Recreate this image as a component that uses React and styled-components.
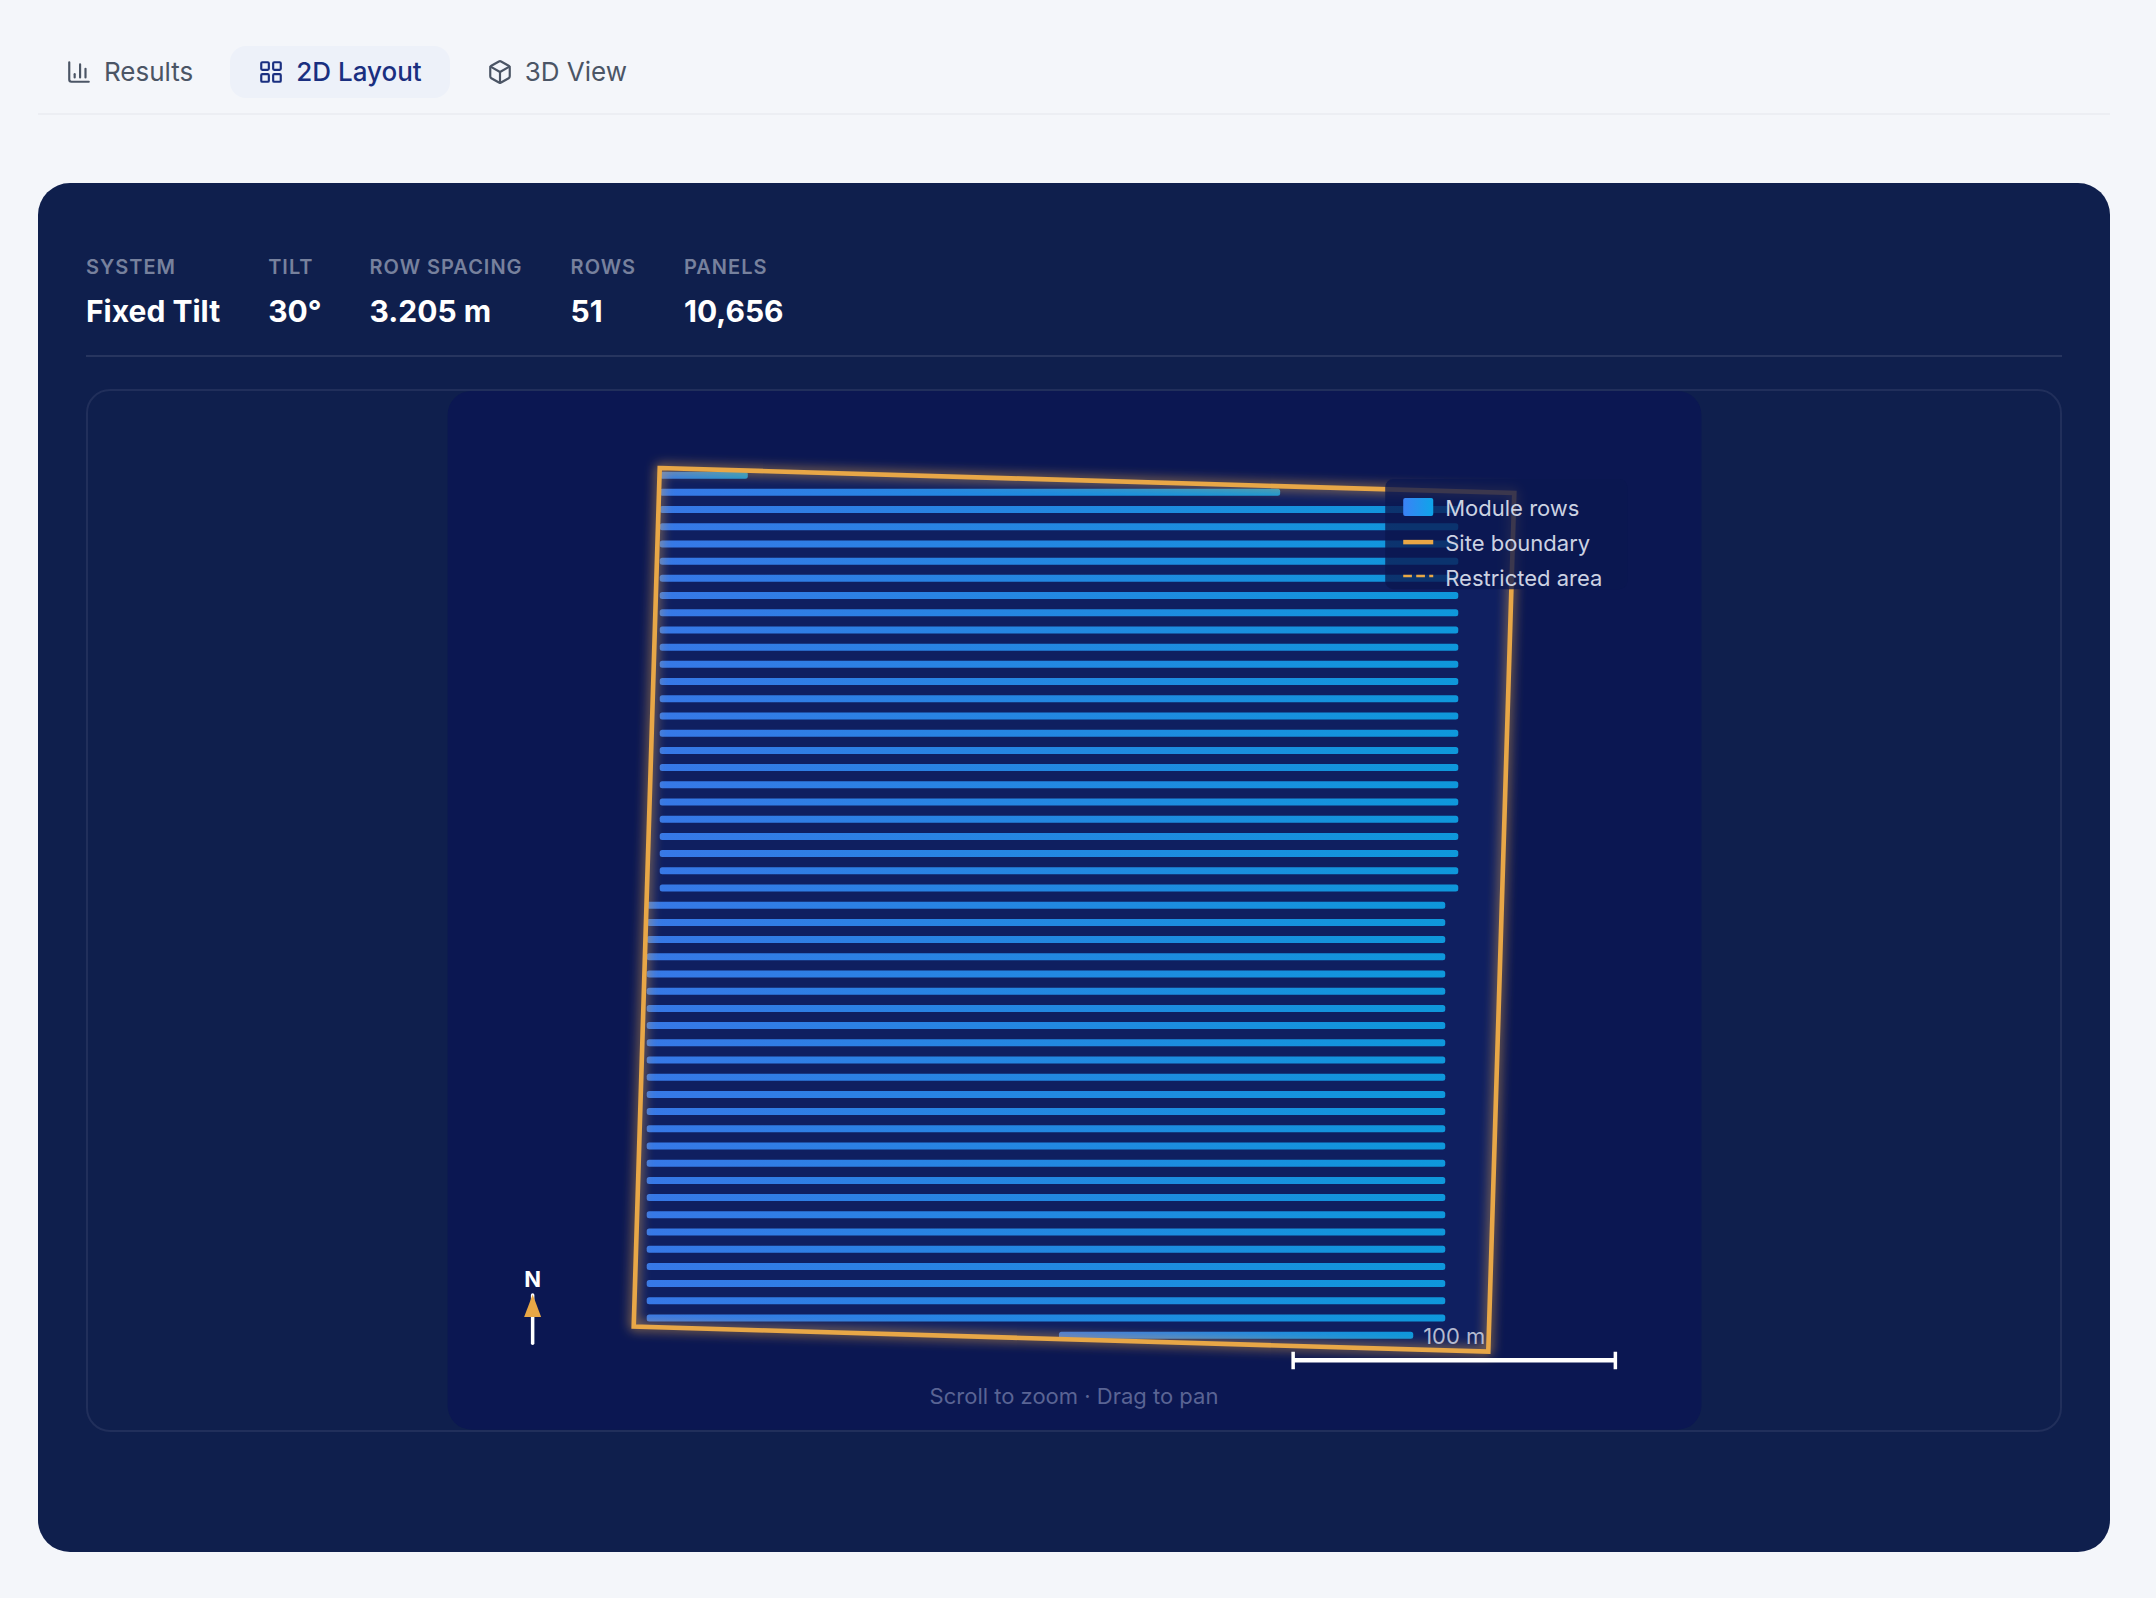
import { useState } from "react";
import styled, { createGlobalStyle } from "styled-components";

const GlobalStyle = createGlobalStyle`
  body {
    margin: 0;
    background: #f4f6fa;
    font-family: Inter, "Liberation Sans", sans-serif;
  }
`;

const Page = styled.main`
  padding: 46px 46px 46px 38px;
`;

const Tabs = styled.nav`
  display: flex;
  gap: 9px;
  padding-bottom: 15px;
  border-bottom: 2px solid #eceef3;
  margin-bottom: 68px;
`;

const Tab = styled.button`
  display: flex;
  align-items: center;
  gap: 12px;
  height: 52px;
  padding: 0 28px;
  border: none;
  border-radius: 16px;
  font-family: inherit;
  font-size: 26px;
  line-height: 30px;
  font-weight: ${(props) => (props.$active ? 500 : 400)};
  color: ${(props) => (props.$active ? "#1a2f80" : "#4b5565")};
  background: ${(props) => (props.$active ? "#edf1f9" : "transparent")};
  cursor: pointer;
`;

const TabIcon = styled.svg`
  width: 26px;
  height: 26px;
  fill: none;
  stroke: currentColor;
  stroke-width: 2;
  stroke-linecap: round;
  stroke-linejoin: round;
`;

const Card = styled.section`
  padding: 72px 48px 120px;
  border-radius: 32px;
  background: #0f1f4d;
`;

const Stats = styled.dl`
  display: flex;
  flex-wrap: wrap;
  gap: 48px;
  margin: 0 0 32px;
  padding-bottom: 26px;
  border-bottom: 2px solid #27355f;
`;

const Stat = styled.div`
  display: flex;
  flex-direction: column;
  gap: 14px;
`;

const StatLabel = styled.dt`
  font-size: 20px;
  line-height: 24px;
  font-weight: 600;
  letter-spacing: 1px;
  text-transform: uppercase;
  color: #77819d;
`;

const StatValue = styled.dd`
  margin: 0;
  font-size: 30px;
  line-height: 36px;
  font-weight: 700;
  color: #fff;
`;

const Stage = styled.div`
  border: 2px solid #212f5b;
  border-radius: 24px;
  overflow: hidden;
`;

const Plan = styled.svg`
  display: block;
  width: 100%;
  height: 65vh;
  cursor: grab;
`;

const PlanText = styled.text`
  font-size: 22px;
  font-weight: ${(props) => props.$weight || 400};
  fill: ${(props) => props.$color || "#ccd2e2"};
`;

const tabs = [
  {
    id: "results",
    label: "Results",
    icon: (
      <>
        <path d="M3 3v16a2 2 0 0 0 2 2h16" />
        <path d="M8 17v-3" />
        <path d="M13 17V5" />
        <path d="M18 17V9" />
      </>
    ),
  },
  {
    id: "layout",
    label: "2D Layout",
    icon: (
      <>
        <rect x="3" y="3" width="7" height="7" rx="1" />
        <rect x="14" y="3" width="7" height="7" rx="1" />
        <rect x="14" y="14" width="7" height="7" rx="1" />
        <rect x="3" y="14" width="7" height="7" rx="1" />
      </>
    ),
  },
  {
    id: "view",
    label: "3D View",
    icon: (
      <>
        <path d="M21 8a2 2 0 0 0-1-1.73l-7-4a2 2 0 0 0-2 0l-7 4A2 2 0 0 0 3 8v8a2 2 0 0 0 1 1.73l7 4a2 2 0 0 0 2 0l7-4A2 2 0 0 0 21 16Z" />
        <path d="m3.3 7 8.7 5 8.7-5" />
        <path d="M12 22V12" />
      </>
    ),
  },
];

const stats = [
  ["System", "Fixed Tilt"],
  ["Tilt", "30°"],
  ["Row spacing", "3.205 m"],
  ["Rows", "51"],
  ["Panels", "10,656"],
];

const ROW_COUNT = 51;
const ROW_PITCH = 17.19;
const SITE = "214,77 1068,102 1042,960 188,935";

// start and end of each module row, in plan units
function rowSpan(i) {
  if (i === 0) return [214, 302];
  if (i === 1) return [214, 834];
  if (i < 25) return [214, 1012];
  if (i < ROW_COUNT - 1) return [201, 999];
  return [613, 967];
}

function ModuleRows() {
  return Array.from({ length: ROW_COUNT }, (_, i) => {
    const [start, end] = rowSpan(i);
    return (
      <rect
        key={i}
        x={start}
        y={80.6 + i * ROW_PITCH}
        width={end - start}
        height="7"
        rx="2.5"
        fill="url(#module)"
        opacity="0.9"
      />
    );
  });
}

function Legend() {
  return (
    <g>
      <rect x="939" y="88" width="242" height="110" rx="8" fill="#0a1750" opacity="0.78" />
      <rect x="957" y="107" width="30" height="18" rx="2" fill="url(#module)" />
      <path d="M957 151h30" stroke="#e8a746" strokeWidth="4.5" />
      <path d="M957 185h30" stroke="#e8a746" strokeWidth="2.5" strokeDasharray="8.7 4.3" />
      <PlanText x="999" y="125">Module rows</PlanText>
      <PlanText x="999" y="160">Site boundary</PlanText>
      <PlanText x="999" y="195">Restricted area</PlanText>
    </g>
  );
}

function NorthArrow() {
  return (
    <g>
      <PlanText x="87" y="895" textAnchor="middle" $weight={700} $color="#fff">
        N
      </PlanText>
      <path d="M87 903.5v48" stroke="#fff" strokeWidth="3.5" strokeLinecap="round" />
      <path d="M87 903l8.5 22.5h-17z" fill="#e8a746" />
    </g>
  );
}

function ScaleBar() {
  return (
    <g>
      <path d="M847 968.7h322" stroke="#fff" strokeWidth="4.5" />
      <path d="M847 960v17.5M1169 960v17.5" stroke="#fff" strokeWidth="3.5" />
      <PlanText x="1008" y="952" textAnchor="middle" $color="#b4bad0">
        100 m
      </PlanText>
    </g>
  );
}

function SitePlan() {
  return (
    <Plan viewBox="0 0 1256 1038" role="img" aria-label="2D site layout">
      <defs>
        <linearGradient id="module">
          <stop offset="0" stopColor="#3b82f6" />
          <stop offset="1" stopColor="#0ea5e9" />
        </linearGradient>
        <filter id="glow" x="-10%" y="-10%" width="120%" height="120%">
          <feGaussianBlur stdDeviation="6" result="blur" />
          <feMerge>
            <feMergeNode in="blur" />
            <feMergeNode in="SourceGraphic" />
          </feMerge>
        </filter>
      </defs>
      <rect x="2" width="1253" height="1038" rx="24" fill="#0b1752" />
      <polygon points={SITE} fill="#0f1f60" />
      <ModuleRows />
      <polygon points={SITE} fill="none" stroke="#e8a746" strokeWidth="4.6" filter="url(#glow)" />
      <Legend />
      <NorthArrow />
      <ScaleBar />
      <PlanText x="628" y="1012" textAnchor="middle" $color="#5a6494">
        Scroll to zoom · Drag to pan
      </PlanText>
    </Plan>
  );
}

function App() {
  const [active, setActive] = useState("layout");

  return (
    <Page>
      <GlobalStyle />
      <Tabs>
        {tabs.map((tab) => (
          <Tab key={tab.id} $active={tab.id === active} onClick={() => setActive(tab.id)}>
            <TabIcon viewBox="0 0 24 24">{tab.icon}</TabIcon>
            {tab.label}
          </Tab>
        ))}
      </Tabs>
      <Card>
        <Stats>
          {stats.map(([label, value]) => (
            <Stat key={label}>
              <StatLabel>{label}</StatLabel>
              <StatValue>{value}</StatValue>
            </Stat>
          ))}
        </Stats>
        <Stage>
          <SitePlan />
        </Stage>
      </Card>
    </Page>
  );
}

export default App;
